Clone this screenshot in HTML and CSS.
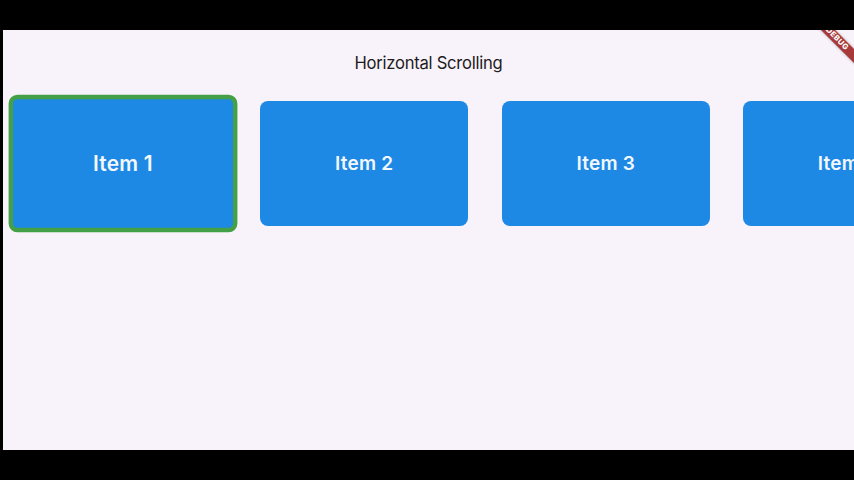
FILE: index.html
```html
<!DOCTYPE html>
<html lang="en">
<head>
<meta charset="utf-8">
<title>Horizontal Scrolling</title>
<link rel="stylesheet" href="styles.css">
</head>
<body>
  <div class="screen">
    <div class="status">
      <span class="status-left">9:41 AM&nbsp;&nbsp;Carrier</span>
      <span class="status-right">100%</span>
    </div>
    <header class="appbar">
      <h1 class="title">Horizontal Scrolling</h1>
    </header>
    <div class="row">
      <div class="card selected"><span>Item 1</span></div>
      <div class="card"><span>Item 2</span></div>
      <div class="card"><span>Item 3</span></div>
      <div class="card"><span>Item 4</span></div>
      <div class="card"><span>Item 5</span></div>
    </div>
    <div class="banner"><span>DEBUG</span></div>
  </div>
</body>
</html>
```

FILE: styles.css
```css
html, body {
  margin: 0;
  padding: 0;
  background: #000;
  width: 854px;
  height: 480px;
  overflow: hidden;
}

.screen {
  position: relative;
  margin: 30px 0 0 3px;
  width: 851px;
  height: 420px;
  background: #f8f2fa;
  overflow: hidden;
  font-family: Inter, "Noto Sans", sans-serif;
}

.status {
  height: 2px;
  overflow: hidden;
  display: flex;
  justify-content: space-between;
  padding: 0 36px 0 14px;
  font-size: 12px;
  font-weight: 600;
  color: #222;
  opacity: 0.45;
  line-height: 12px;
}

.status span {
  margin-top: -10px;
}

.appbar {
  height: 61px;
  display: flex;
  align-items: center;
  justify-content: center;
}

.title {
  margin: 0;
  font-size: 16.6px;
  font-weight: 400;
  color: #1d1b20;
  letter-spacing: -0.25px;
}

.row {
  display: flex;
  gap: 33.6px;
  padding: 7.7px 0 0 15.6px;
}

.card {
  flex: 0 0 auto;
  box-sizing: border-box;
  width: 208px;
  height: 125px;
  border-radius: 8px;
  background: #1e88e5;
  display: flex;
  align-items: center;
  justify-content: center;
  color: #f3f8fe;
  font-size: 19px;
  font-weight: 600;
  letter-spacing: 0.2px;
}

.card.selected {
  border: 4px solid #43a047;
  transform: scale(1.1);
}

.banner {
  position: absolute;
  left: 793.5px;
  top: 4.4px;
  width: 80px;
  height: 10px;
  background: #a8393a;
  transform: rotate(45deg);
  box-shadow: 0 0 3px rgba(0, 0, 0, 0.3);
  display: flex;
  align-items: center;
  justify-content: center;
  color: #fff;
  font-size: 7.6px;
  font-weight: 800;
  letter-spacing: 0.4px;
  line-height: 10px;
}
```
